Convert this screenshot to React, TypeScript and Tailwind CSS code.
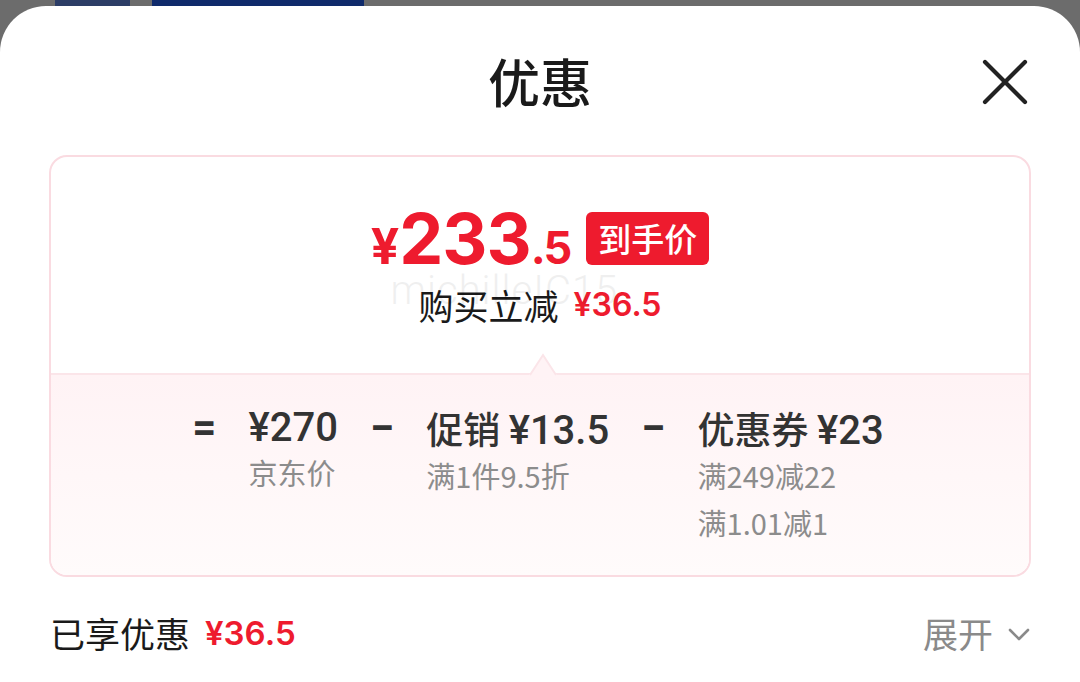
import React from "react";

const cjk = '"Noto Sans CJK SC", "Noto Sans", sans-serif';
const num = 'Roboto, "Noto Sans CJK SC", sans-serif';
const inter = 'Inter, Roboto, "Noto Sans CJK SC", sans-serif';

export default function App() {
  return (
    <div className="w-[1080px] h-[682px] overflow-hidden bg-[#6c6c6c] flex flex-col" style={{ fontFamily: cjk }}>
      <div className="h-[6px] flex shrink-0">
        <div className="w-[55px]" />
        <div className="w-[75px] bg-[#2c3d66]" />
        <div className="w-[22px]" />
        <div className="w-[212px] bg-[#0f2a6b]" />
      </div>
      <div className="flex-1 bg-white rounded-t-[46px] flex flex-col">
        {/* header */}
        <div className="h-[149px] grid grid-cols-[1fr_auto_1fr] items-start">
          <div />
          <div className="pt-[46px] text-[52px] leading-[58px] text-[#1a1a1a] font-medium">优惠</div>
          <div className="flex justify-end pr-[51px] pt-[52px]">
            <svg width="48" height="48" viewBox="0 0 48 48" fill="none">
              <path d="M4 4 L44 44 M44 4 L4 44" stroke="#222" strokeWidth="4.2" strokeLinecap="round" />
            </svg>
          </div>
        </div>

        {/* card */}
        <div className="mx-[49px] h-[422px] border-2 border-[#fadbe1] rounded-[18px] overflow-hidden flex flex-col relative">
          <div className="h-[216px] flex flex-col items-center pt-[47px] relative">
            <div className="flex items-end">
              <div className="flex items-baseline text-[#ee1b2e] font-bold" style={{ fontFamily: inter }}>
                <span className="text-[50px] leading-none">¥</span>
                <span className="text-[70px] leading-none tracking-[-1px]">233</span>
                <span className="text-[45px] leading-none tracking-[-2px]">.5</span>
              </div>
              <div className="ml-[16px] mb-[9px] h-[53px] px-[12px] rounded-[6px] bg-[#ee1b2e] text-white text-[33px] leading-[53px] font-medium">
                到手价
              </div>
            </div>
            <div className="mt-[9px] flex items-center relative">
              <span className="text-[35px] leading-[44px] text-[#1a1a1a]">购买立减</span>
              <span className="ml-[15px] text-[32px] leading-[44px] text-[#ee1b2e] font-semibold" style={{ fontFamily: inter }}>¥36.5</span>
              <span
                className="absolute left-[-28px] top-[-14px] text-[40px] leading-[44px] text-[#000] opacity-[0.06] tracking-[1px] pointer-events-none"
                style={{ fontFamily: 'Roboto, sans-serif', fontWeight: 300 }}
              >
                michilleIC15
              </span>
            </div>
          </div>
          <div className="flex-1 border-t-2 border-[#fbe5e9] bg-gradient-to-b from-[#fff3f5] to-[#fffbfb] relative">
            <svg className="absolute left-[478px] top-[-22px]" width="28" height="23" viewBox="0 0 28 23" fill="none">
              <path d="M0 23 L0 22 L14 2 L28 22 L28 23 Z" fill="#fff3f5" />
              <path d="M1 22 L14 2 L27 22" stroke="#fbe5e9" strokeWidth="2" fill="none" />
            </svg>
            <div className="flex justify-center gap-[32px] pt-[31px] pr-[4px]">
              <div className="text-[42px] leading-[44px] text-[#333] font-bold" style={{ fontFamily: num }}>=</div>
              <div className="flex flex-col">
                <div className="text-[40px] leading-[44px] text-[#333] font-medium" style={{ fontFamily: num }}>¥270</div>
                <div className="text-[29px] leading-[44px] text-[#8c8c8c]">京东价</div>
              </div>
              <div className="text-[44px] leading-[44px] text-[#333] font-bold" style={{ fontFamily: num }}>−</div>
              <div className="flex flex-col">
                <div className="text-[37px] leading-[44px] text-[#333] font-medium whitespace-nowrap">
                  促销 <span className="text-[40px]" style={{ fontFamily: num }}>¥13.5</span>
                </div>
                <div className="text-[29px] leading-[44px] text-[#8c8c8c]">满1件9.5折</div>
              </div>
              <div className="text-[44px] leading-[44px] text-[#333] font-bold" style={{ fontFamily: num }}>−</div>
              <div className="flex flex-col">
                <div className="text-[37px] leading-[44px] text-[#333] font-medium whitespace-nowrap">
                  优惠券 <span className="text-[40px]" style={{ fontFamily: num }}>¥23</span>
                </div>
                <div className="text-[29px] leading-[44px] text-[#8c8c8c]">满249减22</div>
                <div className="mt-[3px] text-[29px] leading-[44px] text-[#8c8c8c]">满1.01减1</div>
              </div>
            </div>
          </div>
        </div>

        {/* bottom row */}
        <div className="flex items-center justify-between pl-[50px] pr-[50px] pt-[38px]">
          <div className="flex items-center">
            <span className="text-[35px] leading-[36px] text-[#1a1a1a]">已享优惠</span>
            <span className="ml-[15px] text-[33px] leading-[36px] text-[#ee1b2e] font-semibold" style={{ fontFamily: inter }}>¥36.5</span>
          </div>
          <div className="flex items-center">
            <span className="text-[35px] leading-[36px] text-[#8a8a8a]">展开</span>
            <svg className="ml-[15px] mt-[4px]" width="22" height="14" viewBox="0 0 22 14" fill="none">
              <path d="M2 2 L11 11 L20 2" stroke="#8a8a8a" strokeWidth="2.6" strokeLinecap="round" strokeLinejoin="round" />
            </svg>
          </div>
        </div>
      </div>
    </div>
  );
}
